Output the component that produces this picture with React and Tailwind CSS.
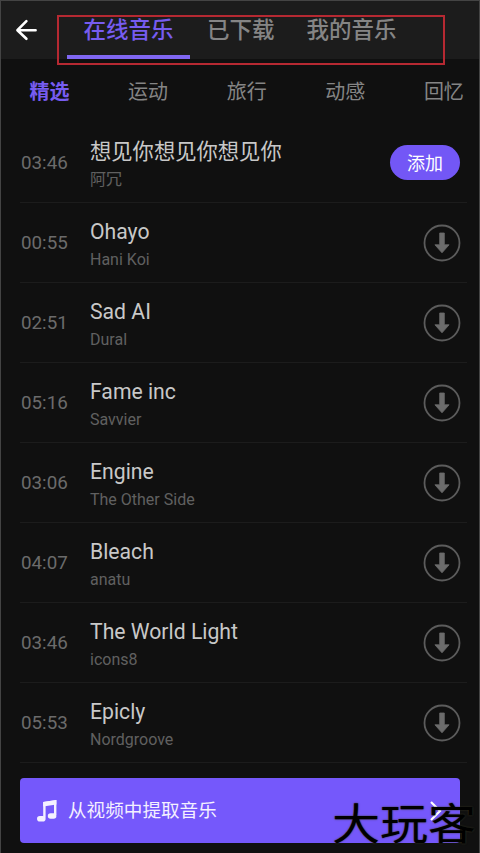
const tabs = ["在线音乐", "已下载", "我的音乐"];

const categories = ["精选", "运动", "旅行", "动感", "回忆"];

const songs = [
  { time: "03:46", title: "想见你想见你想见你", artist: "阿冗", added: true },
  { time: "00:55", title: "Ohayo", artist: "Hani Koi" },
  { time: "02:51", title: "Sad AI", artist: "Dural" },
  { time: "05:16", title: "Fame inc", artist: "Savvier" },
  { time: "03:06", title: "Engine", artist: "The Other Side" },
  { time: "04:07", title: "Bleach", artist: "anatu" },
  { time: "03:46", title: "The World Light", artist: "icons8" },
  { time: "05:53", title: "Epicly", artist: "Nordgroove" },
];

function BackIcon() {
  return (
    <svg width="22" height="22" viewBox="0 0 22 22" fill="none">
      <path
        d="M20.6 11.2H2.6M11.4 2.2L2.4 11.2l9 8.6"
        stroke="#fff"
        strokeWidth="2.6"
        strokeLinecap="round"
        strokeLinejoin="round"
      />
    </svg>
  );
}

function DownloadIcon() {
  return (
    <svg width="38" height="38" viewBox="0 0 38 38" fill="none">
      <circle cx="19" cy="19" r="17.5" stroke="#5c5c5c" strokeWidth="1.8" />
      <path
        d="M16.7 9h4.6v11.8h4.8L19 28.8l-7.1-8h4.8z"
        fill="#6c6c6c"
        stroke="#6c6c6c"
        strokeWidth="0.8"
        strokeLinejoin="round"
      />
    </svg>
  );
}

function MusicIcon() {
  return (
    <svg width="21" height="24" viewBox="0 0 21 24" fill="none">
      <path
        d="M7.4 18.5V4.1l10.8-1.7V16"
        stroke="#f4f0ff"
        strokeWidth="2.4"
      />
      <path d="M6.2 2.9L19.4 1v4.6L6.2 7.5z" fill="#f4f0ff" />
      <rect x="0" y="17" width="8.6" height="5.6" rx="2.8" fill="#f4f0ff" />
      <rect x="10.8" y="14.2" width="8.6" height="5.6" rx="2.8" fill="#f4f0ff" />
    </svg>
  );
}

function SongRow({ song }) {
  return (
    <div className="ml-[19px] mr-3 flex h-20 items-center border-b border-[#1c1c1c]">
      <span className="w-[70px] pl-px pt-0.5 text-[18.8px] text-[#6b6b6b]">
        {song.time}
      </span>
      <div className="flex-1 whitespace-nowrap pt-1.5">
        <div
          className={
            song.added
              ? "h-[29px] text-[21.3px] leading-[27px] text-[#c8c8c8]"
              : "h-[29px] text-[21.2px] leading-[27px] text-[#c8c8c8]"
          }
        >
          {song.title}
        </div>
        <div className="text-[16px] leading-[26px] text-[#606060]">
          {song.artist}
        </div>
      </div>
      {song.added ? (
        <button className="mr-[7px] h-[35px] w-[70px] rounded-full bg-[#7357f6] pt-px text-[18px] text-white">
          添加
        </button>
      ) : (
        <button className="mr-[6px]">
          <DownloadIcon />
        </button>
      )}
    </div>
  );
}

export default function App() {
  return (
    <div className="relative flex h-[853px] w-[480px] flex-col overflow-hidden border-x border-t border-[#444] bg-[#101010] font-[Roboto,'Noto_Sans_CJK_SC',sans-serif]">
      <header className="flex h-[58px] shrink-0 bg-[#1c1c1c]">
        <button className="ml-3.5 mt-[18px] h-[22px]">
          <BackIcon />
        </button>
        <nav className="ml-[30px] flex text-[22.5px] font-medium leading-[59px] text-[#858585]">
          <div className="h-[58px] w-[123px] border-b-4 border-[#8067f2] text-center text-[#775cf0]">
            {tabs[0]}
          </div>
          <div className="ml-[17px]">{tabs[1]}</div>
          <div className="ml-8">{tabs[2]}</div>
        </nav>
      </header>

      <div className="flex h-[64px] shrink-0 gap-[58.6px] whitespace-nowrap pl-[28.5px] text-[20px] leading-[66px] text-[#858585]">
        {categories.map((name, i) => (
          <span
            key={name}
            className={i === 0 ? "font-bold text-[#775cf0]" : ""}
          >
            {name}
          </span>
        ))}
      </div>

      <main className="shrink-0">
        {songs.map((song, i) => (
          <SongRow key={i} song={song} />
        ))}
      </main>

      <button className="ml-[19px] mt-[15px] flex h-[65px] w-[440px] shrink-0 items-center rounded bg-[#7558fb] pl-[17px] pr-[18px] text-[18.6px] text-[#f4f0ff]">
        <MusicIcon />
        <span className="ml-[10px] pt-0.5">从视频中提取音乐</span>
        <svg className="ml-auto" width="12" height="20" viewBox="0 0 12 20">
          <path d="M1 1l9 9-9 9" fill="none" stroke="#fff" strokeWidth="2.2" />
        </svg>
      </button>

      {/* highlight frame around the tabs */}
      <div className="absolute left-[56px] top-[14px] h-[50px] w-[388px] border-2 border-[#b62932]" />

      {/* watermark */}
      <div className="absolute left-[331px] top-[801px] origin-top scale-y-90 whitespace-nowrap text-[48px] leading-[52px] text-black [text-shadow:0_0_2px_#3a3820]">
        大玩客
      </div>
    </div>
  );
}
